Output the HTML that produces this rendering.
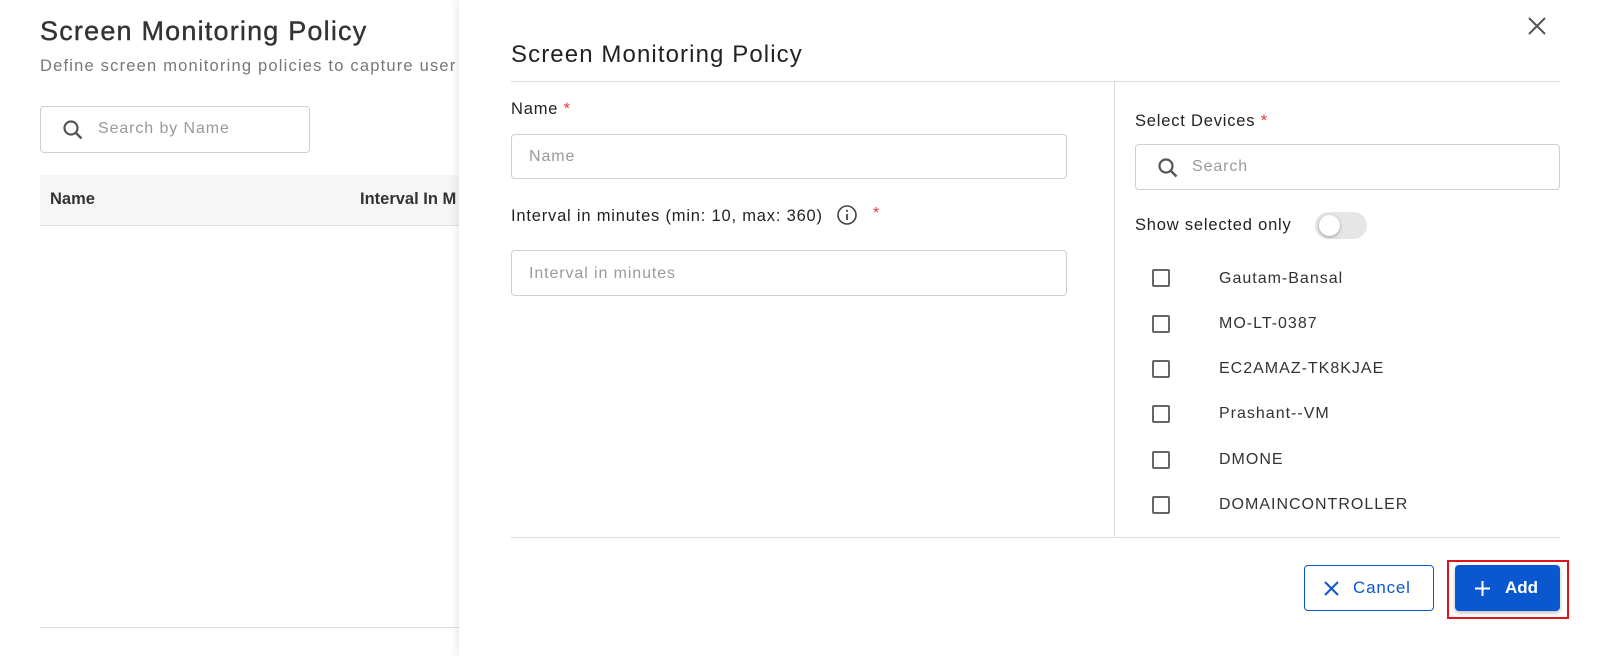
<!DOCTYPE html>
<html><head><meta charset="utf-8"><style>
*{box-sizing:border-box;margin:0;padding:0}
body{width:1608px;height:656px;overflow:hidden;background:#fff;font-family:"Liberation Sans",sans-serif;color:#222;position:relative}
.a{position:absolute;white-space:nowrap}
.inp{position:absolute;border:1px solid #cfcfcf;border-radius:4px;background:#fff}
.ph{color:#9a9a9a;font-size:16px;letter-spacing:.9px}
.lbl{font-size:16.5px;color:#222;letter-spacing:.8px}
.req{color:#e53935}
.cb{position:absolute;left:1152px;width:18px;height:18px;border:2px solid #666;border-radius:2px}
.dl{position:absolute;left:1219px;font-size:16px;color:#333;letter-spacing:1px}
</style></head><body>
<div class="a" style="left:40px;top:16px;font-size:27px;color:#333;letter-spacing:1.2px;-webkit-text-stroke:.4px #333">Screen Monitoring Policy</div>
<div class="a" style="left:40px;top:57px;font-size:16.5px;color:#777;letter-spacing:1.2px">Define screen monitoring policies to capture user</div>
<div class="inp" style="left:40px;top:106px;width:270px;height:47px">
<svg class="a" style="left:20px;top:11px" width="24" height="24" viewBox="0 0 24 24"><circle cx="10" cy="10" r="6.5" fill="none" stroke="#555" stroke-width="2.2"/><path d="M15 15l5.5 5.5" stroke="#555" stroke-width="2.4"/></svg>
<div class="a ph" style="left:57px;top:13px">Search by Name</div></div>
<div class="a" style="left:40px;top:175px;width:440px;height:51px;background:#f6f6f6;border-bottom:1px solid #e2e2e2"></div>
<div class="a" style="left:50px;top:190px;font-size:16.5px;font-weight:bold;color:#333">Name</div>
<div class="a" style="left:360px;top:190px;font-size:16.5px;font-weight:bold;color:#333">Interval In M</div>
<div class="a" style="left:40px;top:627px;width:440px;height:1px;background:#ddd"></div>

<div class="a" style="left:459px;top:0;width:1149px;height:656px;background:#fff;box-shadow:-3px 0 8px rgba(0,0,0,.08)"></div>
<svg class="a" style="left:1527px;top:16px" width="20" height="20" viewBox="0 0 20 20"><path d="M2 2L18 18M18 2L2 18" stroke="#555" stroke-width="2"/></svg>
<div class="a" style="left:511px;top:41px;font-size:24px;color:#222;letter-spacing:1.1px">Screen Monitoring Policy</div>
<div class="a" style="left:511px;top:81px;width:1049px;height:1px;background:#ddd"></div>
<div class="a" style="left:1114px;top:82px;width:1px;height:455px;background:#ddd"></div>
<div class="a" style="left:511px;top:537px;width:1049px;height:1px;background:#ddd"></div>

<div class="a lbl" style="left:511px;top:100px">Name <span class="req">*</span></div>
<div class="inp" style="left:511px;top:134px;width:556px;height:45px"><div class="a ph" style="left:17px;top:13px">Name</div></div>
<div class="a lbl" style="left:511px;top:207px">Interval in minutes (min: 10, max: 360)</div>
<svg class="a" style="left:836px;top:204px" width="22" height="22" viewBox="0 0 22 22"><circle cx="11" cy="11" r="9" fill="none" stroke="#444" stroke-width="1.6"/><path d="M11 10v6" stroke="#444" stroke-width="1.8"/><circle cx="11" cy="6.8" r="1.1" fill="#444"/></svg>
<div class="a req" style="left:873px;top:205px;font-size:16px">*</div>
<div class="inp" style="left:511px;top:250px;width:556px;height:46px"><div class="a ph" style="left:17px;top:14px">Interval in minutes</div></div>

<div class="a lbl" style="left:1135px;top:112px">Select Devices <span class="req">*</span></div>
<div class="inp" style="left:1135px;top:144px;width:425px;height:46px">
<svg class="a" style="left:20px;top:11px" width="24" height="24" viewBox="0 0 24 24"><circle cx="10" cy="10" r="6.5" fill="none" stroke="#555" stroke-width="2.2"/><path d="M15 15l5.5 5.5" stroke="#555" stroke-width="2.4"/></svg>
<div class="a ph" style="left:56px;top:13px">Search</div></div>
<div class="a lbl" style="left:1135px;top:216px">Show selected only</div>
<div class="a" style="left:1315px;top:212px;width:52px;height:27px;border-radius:14px;background:#e6e6e6"></div>
<div class="a" style="left:1319px;top:215px;width:21px;height:21px;border-radius:50%;background:#fff;box-shadow:0 1px 3px rgba(0,0,0,.35)"></div>

<div class="cb" style="top:269px"></div><div class="dl" style="top:270px">Gautam-Bansal</div>
<div class="cb" style="top:315px"></div><div class="dl" style="top:315px">MO-LT-0387</div>
<div class="cb" style="top:360px"></div><div class="dl" style="top:360px">EC2AMAZ-TK8KJAE</div>
<div class="cb" style="top:405px"></div><div class="dl" style="top:405px">Prashant--VM</div>
<div class="cb" style="top:451px"></div><div class="dl" style="top:451px">DMONE</div>
<div class="cb" style="top:496px"></div><div class="dl" style="top:496px">DOMAINCONTROLLER</div>

<div class="a" style="left:1304px;top:565px;width:130px;height:46px;border:1.5px solid #0b57d0;border-radius:4px"></div>
<svg class="a" style="left:1323px;top:580px" width="17" height="17" viewBox="0 0 17 17"><path d="M2 2L15 15M15 2L2 15" stroke="#0b57d0" stroke-width="2"/></svg>
<div class="a" style="left:1353px;top:578px;font-size:17px;color:#0b57d0;letter-spacing:.8px">Cancel</div>
<div class="a" style="left:1447px;top:560px;width:122px;height:59px;border:2px solid #e0141e"></div>
<div class="a" style="left:1455px;top:565px;width:105px;height:46px;background:#0b57d0;border-radius:4px;box-shadow:0 2px 4px rgba(0,0,0,.25)"></div>
<svg class="a" style="left:1474px;top:580px" width="17" height="17" viewBox="0 0 17 17"><path d="M8.5 1v15M1 8.5h15" stroke="#fff" stroke-width="2"/></svg>
<div class="a" style="left:1505px;top:578px;font-size:17px;color:#fff;font-weight:bold">Add</div>
</body></html>
